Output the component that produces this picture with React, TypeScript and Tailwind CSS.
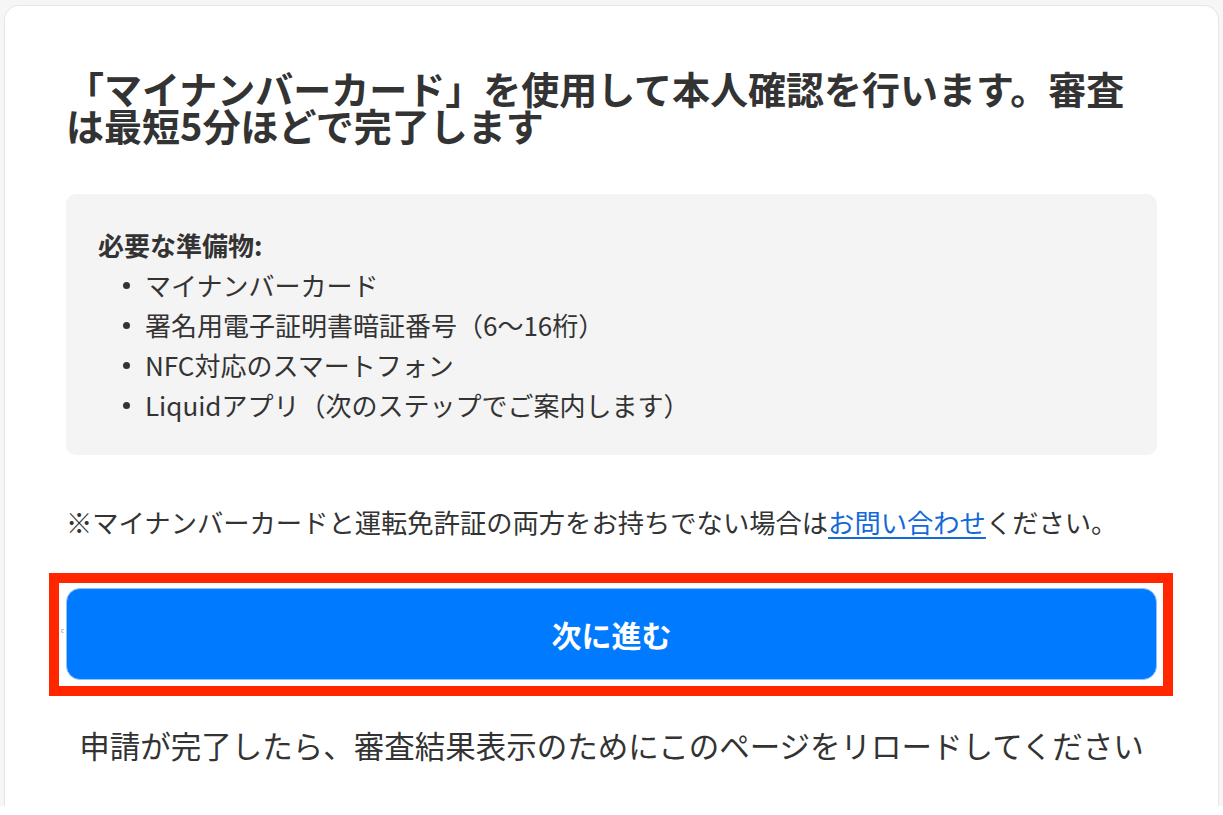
import React from "react";

const items = [
  "マイナンバーカード",
  "署名用電子証明書暗証番号（6〜16桁）",
  "NFC対応のスマートフォン",
  "Liquidアプリ（次のステップでご案内します）",
];

export default function App() {
  return (
    <div
      className="w-[1223px] h-[815px] bg-white overflow-hidden text-[#333333]"
      style={{ fontFamily: '"Noto Sans CJK JP", "Noto Sans", sans-serif' }}
    >
      <div className="h-[806px] bg-[#f6f6f6] pt-[5px] px-[4px]">
        <div className="h-full bg-white rounded-t-[15px] border border-b-0 border-[#e6e6e6] pt-[63px] px-[61px]">
          <h1 className="text-[38px] leading-[37px] font-bold pr-[22px]">
            「マイナンバーカード」を使用して本人確認を行います。審査は最短5分ほどで完了します
          </h1>

          <div className="mt-[51px] bg-[#f4f4f4] rounded-[10px] pl-[32px] pr-[32px] pt-[31px] pb-[30px]">
            <p className="text-[26px] leading-[40px] font-bold">必要な準備物:</p>
            <ul>
              {items.map((t) => (
                <li key={t} className="flex items-center text-[26px] leading-[40px]">
                  <span className="ml-[25px] mr-[15px] w-[7px] h-[7px] rounded-full bg-[#333333] shrink-0" />
                  <span>{t}</span>
                </li>
              ))}
            </ul>
          </div>

          <p className="mt-[47px] text-[26.3px] leading-[40px] whitespace-nowrap">
            ※マイナンバーカードと運転免許証の両方をお持ちでない場合は
            <a href="#" className="text-[#1469d8] underline underline-offset-[4px]">
              お問い合わせ
            </a>
            ください。
          </p>

          <div className="relative mt-[46px]">
            <div className="absolute -left-[17px] -right-[16px] -top-[15px] -bottom-[16px] border-[10px] border-[#ff2600] pointer-events-none" />
            <span className="absolute -left-[5px] top-[40px] text-[6px] leading-[6px] text-[#888888]">c</span>
            <button className="relative w-full h-[92px] rounded-[14px] bg-[#007bff] border border-[#8fc2ff] text-white text-[30px] font-bold">
              次に進む
            </button>
          </div>

          <p className="mt-[45px] text-center text-[30.5px] leading-[40px] whitespace-nowrap">
            申請が完了したら、審査結果表示のためにこのページをリロードしてください
          </p>
        </div>
      </div>
    </div>
  );
}
